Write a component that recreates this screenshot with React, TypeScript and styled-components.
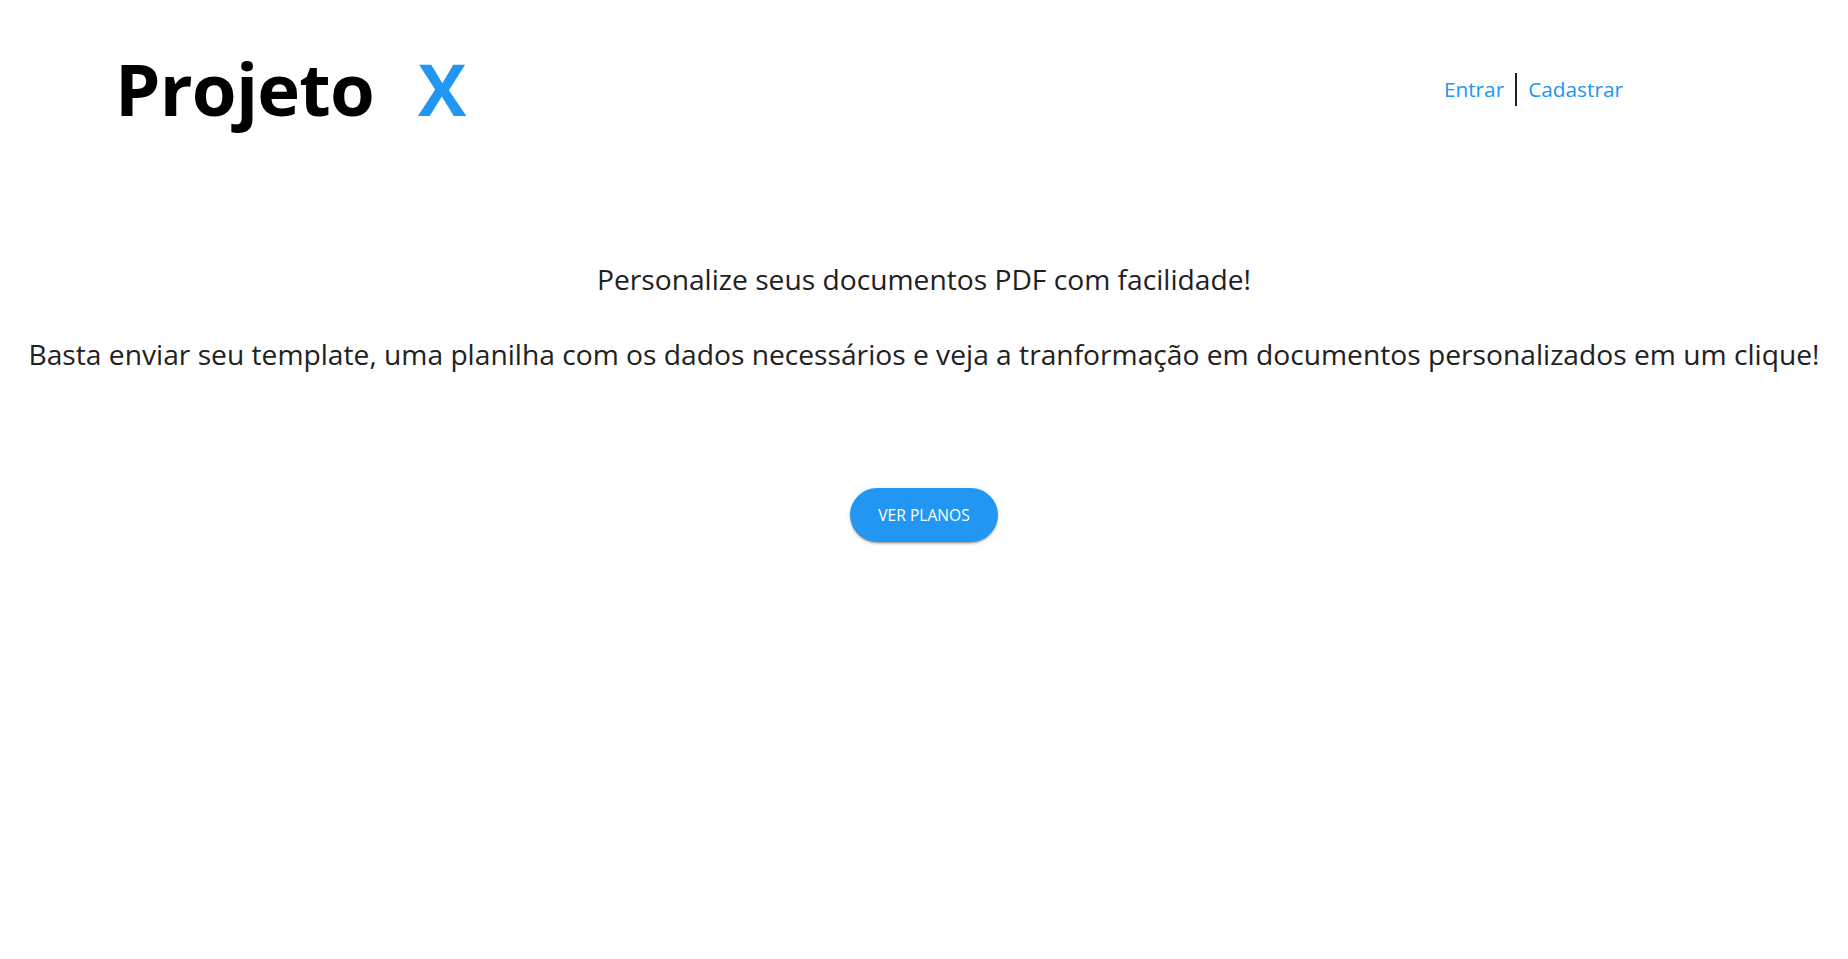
import React from "react";
import styled, { createGlobalStyle } from "styled-components";

const GlobalStyle = createGlobalStyle`
  html, body {
    margin: 0;
    padding: 0;
    background: #ffffff;
  }
  body {
    font-family: "Open Sans", "Noto Sans", sans-serif;
    color: #212121;
  }
  * { box-sizing: border-box; }
`;

const Page = styled.div`
  display: flex;
  flex-direction: column;
  min-height: 959px;
`;

const Header = styled.header`
  display: flex;
  align-items: center;
  justify-content: space-between;
  height: 176px;
  padding: 0 225px 0 115px;
`;

const Logo = styled.h1`
  display: flex;
  align-items: baseline;
  margin: 0;
  font-family: "Open Sans", sans-serif;
  font-weight: 700;
  font-size: 72.5px;
  line-height: 1;
  color: #000000;
  letter-spacing: -0.8px;
`;

const LogoAccent = styled.span`
  color: #2196f3;
  margin-left: 44px;
`;

const Nav = styled.nav`
  display: flex;
  align-items: center;
  margin-top: 2px;
`;

const NavLink = styled.a<{ $divided?: boolean }>`
  font-size: 20.8px;
  color: #2196f3;
  text-decoration: none;
  padding: 0 11px;
  line-height: 33px;
  border-left: ${(p) => (p.$divided ? "2px solid #212121" : "none")};
  &:first-child { padding-left: 0; }
  &:last-child { padding-right: 0; }
`;

const Main = styled.main`
  display: flex;
  flex-direction: column;
  align-items: center;
  text-align: center;
  padding-top: 83px;
`;

const Lead = styled.p`
  margin: 0;
  font-size: 28.2px;
  line-height: 40px;
  color: #212121;
`;

const SubLead = styled(Lead)`
  margin-top: 35px;
  white-space: nowrap;
`;

const PlansButton = styled.button`
  margin-top: 114px;
  height: 54px;
  padding: 0 28px;
  border: none;
  border-radius: 27px;
  background: #2196f3;
  color: #ffffff;
  font-family: "Open Sans", sans-serif;
  font-size: 15.6px;
  letter-spacing: 0;
  text-transform: uppercase;
  box-shadow: 0 3px 1px -2px rgba(0,0,0,0.2), 0 2px 2px 0 rgba(0,0,0,0.14), 0 1px 5px 0 rgba(0,0,0,0.12);
  cursor: pointer;
`;

export default function App() {
  return (
    <>
      <GlobalStyle />
      <Page>
        <Header>
          <Logo>
            <span>Projeto</span>
            <LogoAccent>X</LogoAccent>
          </Logo>
          <Nav>
            <NavLink href="#">Entrar</NavLink>
            <NavLink href="#" $divided>Cadastrar</NavLink>
          </Nav>
        </Header>
        <Main>
          <Lead>Personalize seus documentos PDF com facilidade!</Lead>
          <SubLead>
            Basta enviar seu template, uma planilha com os dados necessários e veja a tranformação em documentos personalizados em um clique!
          </SubLead>
          <PlansButton>Ver planos</PlansButton>
        </Main>
      </Page>
    </>
  );
}
